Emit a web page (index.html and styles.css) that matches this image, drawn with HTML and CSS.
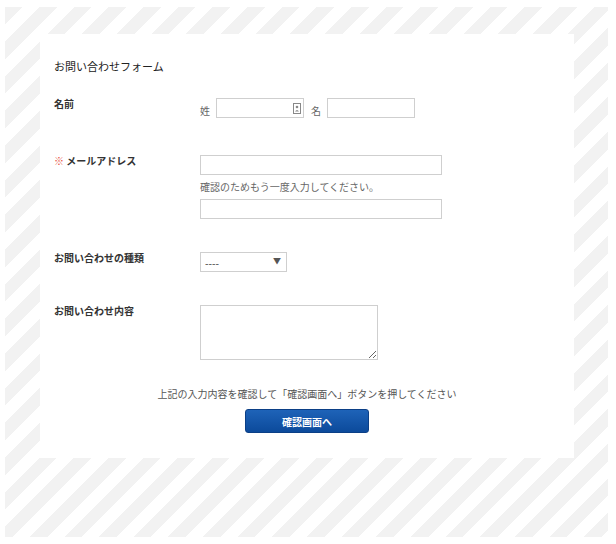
FILE: index.html
```html
<!DOCTYPE html>
<html lang="ja">
<head>
<meta charset="utf-8">
<title>お問い合わせフォーム</title>
<link rel="stylesheet" href="styles.css">
</head>
<body>
<div class="stripes">
  <div class="card">
    <h1 class="title">お問い合わせフォーム</h1>
    <form class="form">
      <div class="row row-name">
        <div class="label">名前</div>
        <div class="field name-field">
          <span class="sub">姓</span>
          <span class="input-wrap">
            <input class="input input-short" type="text">
            <svg class="autofill" width="8" height="11" viewBox="0 0 8 11"><rect x="0.5" y="0.5" width="7" height="10" fill="#fff" stroke="#888"/><circle cx="4" cy="4" r="1.3" fill="#888"/><path d="M2 8.5 Q4 5.5 6 8.5 Z" fill="#888"/></svg>
          </span>
          <span class="sub">名</span>
          <input class="input input-short" type="text">
        </div>
      </div>
      <div class="row row-mail">
        <div class="label"><span class="req">※</span> メールアドレス</div>
        <div class="field">
          <input class="input input-long" type="text">
          <p class="note">確認のためもう一度入力してください。</p>
          <input class="input input-long" type="text">
        </div>
      </div>
      <div class="row row-kind">
        <div class="label">お問い合わせの種類</div>
        <div class="field">
          <span class="select-wrap">
            <select class="select"><option>----</option></select>
          </span>
        </div>
      </div>
      <div class="row row-body">
        <div class="label">お問い合わせ内容</div>
        <div class="field">
          <textarea class="textarea"></textarea>
        </div>
      </div>
      <p class="confirm-text">上記の入力内容を確認して「確認画面へ」ボタンを押してください</p>
      <div class="actions">
        <button class="btn" type="button">確認画面へ</button>
      </div>
    </form>
  </div>
</div>
</body>
</html>
```
FILE: styles.css
```css
html, body {
  margin: 0;
  padding: 0;
  background: #fff;
}
body {
  font-family: "Noto Sans CJK JP", "Noto Sans", sans-serif;
  color: #333;
}
.stripes {
  margin: 7px 8px 7px 5px;
  padding: 27px 34px 79px 35px;
  background-color: #fff;
  background-image: repeating-linear-gradient(135deg, #f2f2f2 0 12.5px, #fff 12.5px 24.5px);
}
.card {
  background: #fff;
  padding: 24px 14px 25px 14px;
  height: 375px;
}
.title {
  margin: 0;
  font-size: 11px;
  line-height: 16px;
  font-weight: normal;
  color: #222;
}
.form {
  margin: 24px 0 0;
}
.row {
  display: grid;
  grid-template-columns: 146px 1fr;
  align-items: start;
}
.row-name { margin-bottom: 37px; }
.row-mail { margin-bottom: 33px; }
.row-kind { margin-bottom: 33px; }
.label {
  font-size: 10px;
  line-height: 12px;
  font-weight: bold;
  color: #333;
}
.req {
  color: #e8553f;
  font-weight: normal;
}
.field {
  display: flex;
  flex-direction: column;
  align-items: flex-start;
}
.name-field {
  flex-direction: row;
  align-items: center;
}
.sub {
  font-size: 10px;
  color: #666;
  margin-right: 6px;
  padding-top: 4px;
}
.input-wrap {
  position: relative;
  display: block;
  margin-right: 7px;
}
.autofill {
  position: absolute;
  right: 3px;
  top: 5px;
}
.input {
  box-sizing: border-box;
  height: 20px;
  border: 1px solid #cfcfcf;
  border-radius: 0;
  margin: 0;
  padding: 0 4px;
  background: #fff;
  font-size: 10px;
  display: block;
}
.input-short { width: 88px; }
.input-long { width: 242px; }
.note {
  margin: 5px 0 5px;
  font-size: 10px;
  line-height: 14px;
  color: #666;
}
.select-wrap {
  position: relative;
  display: block;
}
.select-wrap::after {
  content: "▼";
  position: absolute;
  right: 6px;
  top: 4px;
  font-size: 8px;
  line-height: 10px;
  color: #555;
  pointer-events: none;
}
.select {
  appearance: none;
  -webkit-appearance: none;
  box-sizing: border-box;
  width: 87px;
  height: 20px;
  border: 1px solid #cfcfcf;
  border-radius: 0;
  background: #fff;
  padding: 0 4px;
  margin: 0;
  font-family: "Noto Sans CJK JP", sans-serif;
  font-size: 10px;
  color: #333;
  display: block;
}
.textarea {
  box-sizing: border-box;
  width: 178px;
  height: 55px;
  border: 1px solid #cfcfcf;
  border-radius: 0;
  margin: 0;
  padding: 2px;
  display: block;
  resize: both;
}
.confirm-text {
  margin: 27px 0 0;
  text-align: center;
  font-size: 10px;
  line-height: 14px;
  color: #555;
}
.actions {
  display: flex;
  justify-content: center;
  margin-top: 8px;
}
.btn {
  width: 124px;
  height: 24px;
  border: 1px solid #0b3f86;
  border-radius: 3px;
  background: linear-gradient(#1e63b8, #0c4a9b);
  color: #fff;
  font-family: "Noto Sans CJK JP", sans-serif;
  font-size: 10px;
  font-weight: bold;
  padding: 0;
  cursor: pointer;
}
```
